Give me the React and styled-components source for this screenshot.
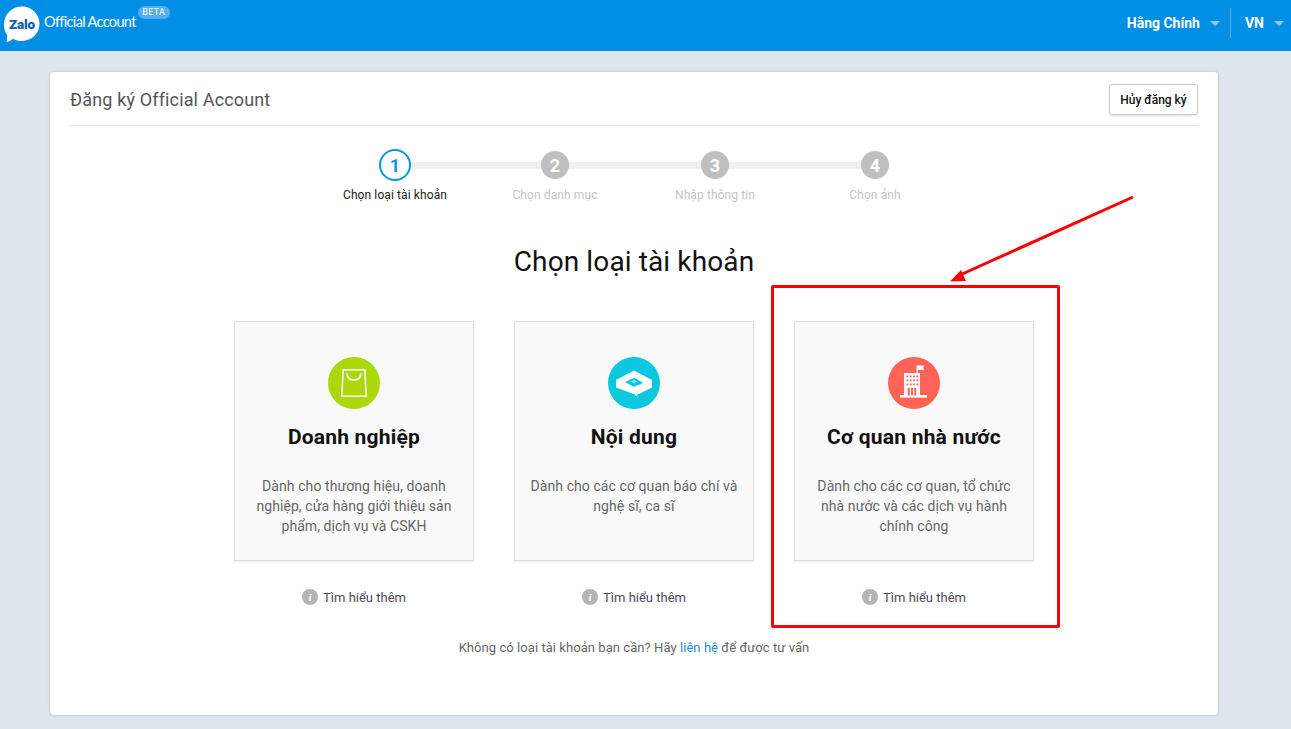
import React from "react";
import styled, { createGlobalStyle } from "styled-components";

const Global = createGlobalStyle`
  html, body { margin: 0; padding: 0; height: 100%; background: #dfe6ed; }
  body { font-family: Roboto, "Liberation Sans", sans-serif; overflow: hidden; }
  #root { position: relative; }
  * { box-sizing: border-box; }
`;

const TopBar = styled.header`
  height: 51px;
  background: #008fe5;
  display: flex;
  align-items: center;
  justify-content: space-between;
  color: #fff;
`;
const Brand = styled.div`
  display: flex;
  align-items: flex-start;
  padding-left: 1px;
  height: 43px;
`;
const BrandName = styled.span`
  font-family: Lato, "Open Sans", sans-serif;
  font-size: 14.5px;
  letter-spacing: -0.65px;
  margin: 9px 0 0 3px;
  line-height: 18px;
`;
const Beta = styled.span`
  background: #55afec;
  border-radius: 7px;
  height: 13px;
  width: 32px;
  font-size: 9px;
  line-height: 13px;
  text-align: center;
  margin: 2px 0 0 2px;
  letter-spacing: 0.3px;
`;
const TopRight = styled.div`
  display: flex;
  align-items: center;
  height: 30px;
  margin-bottom: 5px;
`;
const TopItem = styled.div`
  display: flex;
  align-items: center;
  height: 30px;
  font-size: 14px;
  font-weight: 700;
  padding: ${(p) => p.$pad};
  border-left: ${(p) => (p.$divided ? "1px solid #4fb0ec" : "none")};
`;
const Caret = styled.i`
  display: block;
  width: 0;
  height: 0;
  margin-left: ${(p) => p.$gap}px;
  border-left: 5px solid transparent;
  border-right: 5px solid transparent;
  border-top: 5px solid #8ccbf2;
`;

const Panel = styled.main`
  position: relative;
  width: 1168px;
  height: 643px;
  margin: 21px 0 0 50px;
  padding: 0 20px;
  background: #fff;
  border-radius: 4px;
  box-shadow: 0 0 3px rgba(0, 0, 0, 0.22);
`;
const PanelHead = styled.div`
  height: 54px;
  display: flex;
  align-items: center;
  justify-content: space-between;
  border-bottom: 1px solid #e6e6e6;
`;
const PanelTitle = styled.h1`
  margin: 2px 0 0;
  font-size: 18px;
  font-weight: 400;
  letter-spacing: 0.15px;
  color: #555;
`;
const CancelButton = styled.button`
  width: 89px;
  height: 31px;
  margin: 0;
  padding: 0;
  background: #fff;
  border: 1px solid #ccc;
  border-radius: 3px;
  box-shadow: 0 1px 2px rgba(0, 0, 0, 0.12);
  font-family: inherit;
  font-size: 12px;
  font-weight: 500;
  color: #111;
  transform: translateY(1px);
`;

const Stepper = styled.ol`
  list-style: none;
  display: flex;
  justify-content: center;
  margin: 23px 0 0;
  padding: 0;
  transform: translateX(1px);
`;
const Step = styled.li`
  position: relative;
  width: 160px;
  display: flex;
  flex-direction: column;
  align-items: center;
  &:not(:last-child)::before {
    content: "";
    position: absolute;
    top: 13px;
    left: 80px;
    width: 160px;
    height: 7px;
    background: #f0f0f0;
  }
`;
const StepDotWrap = styled.div`
  position: relative;
  z-index: 1;
  height: 32px;
  display: flex;
  align-items: center;
  justify-content: center;
`;
const StepDot = styled.div`
  width: ${(p) => (p.$active ? 32 : 28)}px;
  height: ${(p) => (p.$active ? 32 : 28)}px;
  border-radius: 50%;
  background: ${(p) => (p.$active ? "#fff" : "#bfbfbf")};
  border: ${(p) => (p.$active ? "2px solid #0a94e8" : "none")};
  color: ${(p) => (p.$active ? "#0a94e8" : "#fff")};
  font-size: 18px;
  font-weight: 700;
  display: flex;
  align-items: center;
  justify-content: center;
`;
const StepLabel = styled.div`
  margin-top: 6px;
  font-size: 12px;
  line-height: 16px;
  letter-spacing: 0.1px;
  color: ${(p) => (p.$active ? "#222" : "#c4c4c4")};
`;

const Heading = styled.h2`
  margin: 39px 0 39px;
  font-size: 28px;
  line-height: 40px;
  font-weight: 400;
  letter-spacing: 0.12px;
  color: #111;
  text-align: center;
`;
const Options = styled.div`
  display: flex;
  justify-content: center;
  gap: 40px;
`;
const Option = styled.section`
  width: 240px;
  display: flex;
  flex-direction: column;
  align-items: center;
`;
const OptionCard = styled.div`
  width: 240px;
  height: 240px;
  padding: 35px 14px 0;
  background: #f9f9f9;
  border: 1px solid #dedede;
  box-shadow: 0 1px 2px rgba(0, 0, 0, 0.08);
  display: flex;
  flex-direction: column;
  align-items: center;
`;
const OptionIcon = styled.div`
  width: 52px;
  height: 52px;
  border-radius: 50%;
  background: ${(p) => p.$color};
  display: flex;
  align-items: center;
  justify-content: center;
`;
const OptionTitle = styled.h3`
  margin: 14px 0 25px;
  font-size: 21px;
  line-height: 28px;
  font-weight: 700;
  letter-spacing: 0.2px;
  color: #111;
`;
const OptionText = styled.p`
  margin: 0;
  font-size: 14px;
  line-height: 20px;
  letter-spacing: 0.08px;
  color: #666;
  text-align: center;
`;
const LearnMore = styled.a`
  display: flex;
  align-items: center;
  gap: 5px;
  height: 20px;
  margin-top: 26px;
  font-size: 13px;
  color: #4a4a5c;
`;
const InfoDot = styled.span`
  width: 16px;
  height: 16px;
  border-radius: 50%;
  background: #b5b5b5;
  color: #fff;
  font: italic 700 11px/16px "Liberation Serif", serif;
  text-align: center;
`;
const Footnote = styled.p`
  margin: 33px 0 0;
  font-size: 13px;
  line-height: 16px;
  letter-spacing: 0.06px;
  color: #666;
  text-align: center;
`;
const ContactLink = styled.a`
  color: #1a8fdc;
`;

const Highlight = styled.div`
  position: absolute;
  left: 771px;
  top: 285px;
  width: 289px;
  height: 343px;
  border: 3px solid #fa0000;
  border-radius: 2px;
  pointer-events: none;
`;
const ArrowLayer = styled.svg`
  position: absolute;
  left: 940px;
  top: 190px;
  pointer-events: none;
`;

const BagIcon = () => (
  <svg width="28" height="30" viewBox="0 0 28 30" fill="none" stroke="#fff" strokeWidth="1.5">
    <path d="M3.200 1.800h21.600l1.400 26.400H1.800z" />
    <path d="M7.200 5.500c0 4.500 3 6.500 6.800 6.500s6.800-2 6.800-6.500" strokeWidth="1.700" />
  </svg>
);
const ContentIcon = () => (
  <svg width="36" height="30" viewBox="0 0 36 30">
    <path fill="#fff" d="M18 2.500l18 9.500v7.500L23 26l-1.600.2-.2 3-2.800-3.400-1 .2L0 19.500V12z" />
    <path fill="#0ac8de" d="M18 9.800l9 5-3.200 1.900h-1.800l-4 2.300-9-5z" />
    <path fill="#fff" d="M14.800 13.600L18 12l3.200 1.600L18 15.300z" opacity="0.55" />
  </svg>
);
const BuildingIcon = () => (
  <svg width="30" height="36" viewBox="0 0 30 36" fill="#fff">
    <rect x="17.500" y="0.500" width="1.200" height="8" />
    <path d="M18.700.5h6.800L24 2.800l1.500 2.300h-6.800z" />
    <rect x="5" y="8" width="16" height="22.500" />
    <rect x="1" y="30" width="27" height="2.600" />
    <g fill="#fe6355">
      {[10.5, 14.5, 18.5].map((y) =>
        [7.5, 10.8, 14.1, 17.4].map((x) => <rect key={`${x}-${y}`} x={x} y={y} width="1.800" height="1.800" />)
      )}
      {[8.8, 12, 15.2].map((x) => (
        <rect key={x} x={x} y="23" width="2" height="7.500" />
      ))}
    </g>
  </svg>
);
const ZaloMark = () => (
  <svg width="40" height="40" viewBox="0 0 40 40">
    <path fill="#fff" d="M21 2.500c9.800 0 17.500 7.800 17.500 17.300S30.800 37 21 37c-3.500 0-6.300-.8-9-2.300-2.200 2-4.500 3-6.300 3.300l.6-6.700C3.800 28 2.800 24.500 3 20 3.300 10 11 2.500 21 2.500z" />
    <text x="8" y="24.500" fontFamily="Roboto, sans-serif" fontWeight="900" fontSize="13.500" letterSpacing="-0.2" fill="#0d5fb8">Zalo</text>
  </svg>
);

const steps = ["Chọn loại tài khoản", "Chọn danh mục", "Nhập thông tin", "Chọn ảnh"];
const options = [
  { title: "Doanh nghiệp", color: "#aad80a", icon: <BagIcon />, text: "Dành cho thương hiệu, doanh nghiệp, cửa hàng giới thiệu sản phẩm, dịch vụ và CSKH" },
  { title: "Nội dung", color: "#0ac8de", icon: <ContentIcon />, text: "Dành cho các cơ quan báo chí và nghệ sĩ, ca sĩ" },
  { title: "Cơ quan nhà nước", color: "#fe6355", icon: <BuildingIcon />, text: "Dành cho các cơ quan, tổ chức nhà nước và các dịch vụ hành chính công" },
];

export default function App() {
  return (
    <>
      <Global />
      <TopBar>
        <Brand>
          <ZaloMark />
          <BrandName>Official Account</BrandName>
          <Beta>BETA</Beta>
        </Brand>
        <TopRight>
          <TopItem $pad="0 10px 0 0">
            Hằng Chính
            <Caret $gap={10} />
          </TopItem>
          <TopItem $divided $pad="0 7px 0 14px">
            VN
            <Caret $gap={10} />
          </TopItem>
        </TopRight>
      </TopBar>
      <Panel>
        <PanelHead>
          <PanelTitle>Đăng ký Official Account</PanelTitle>
          <CancelButton>Hủy đăng ký</CancelButton>
        </PanelHead>
        <Stepper>
          {steps.map((label, i) => (
            <Step key={label}>
              <StepDotWrap>
                <StepDot $active={i === 0}>{i + 1}</StepDot>
              </StepDotWrap>
              <StepLabel $active={i === 0}>{label}</StepLabel>
            </Step>
          ))}
        </Stepper>
        <Heading>Chọn loại tài khoản</Heading>
        <Options>
          {options.map((o) => (
            <Option key={o.title}>
              <OptionCard>
                <OptionIcon $color={o.color}>{o.icon}</OptionIcon>
                <OptionTitle>{o.title}</OptionTitle>
                <OptionText>{o.text}</OptionText>
              </OptionCard>
              <LearnMore>
                <InfoDot>i</InfoDot>
                Tìm hiểu thêm
              </LearnMore>
            </Option>
          ))}
        </Options>
        <Footnote>
          Không có loại tài khoản bạn cần? Hãy <ContactLink>liên hệ</ContactLink> để được tư vấn
        </Footnote>
      </Panel>
      <Highlight />
      <ArrowLayer width="200" height="100" viewBox="0 0 200 100">
        <path d="M193 7L20 85" stroke="#fa0000" strokeWidth="3" fill="none" />
        <path d="M10 91.500L21 80l5 11z" fill="#fa0000" />
      </ArrowLayer>
    </>
  );
}
